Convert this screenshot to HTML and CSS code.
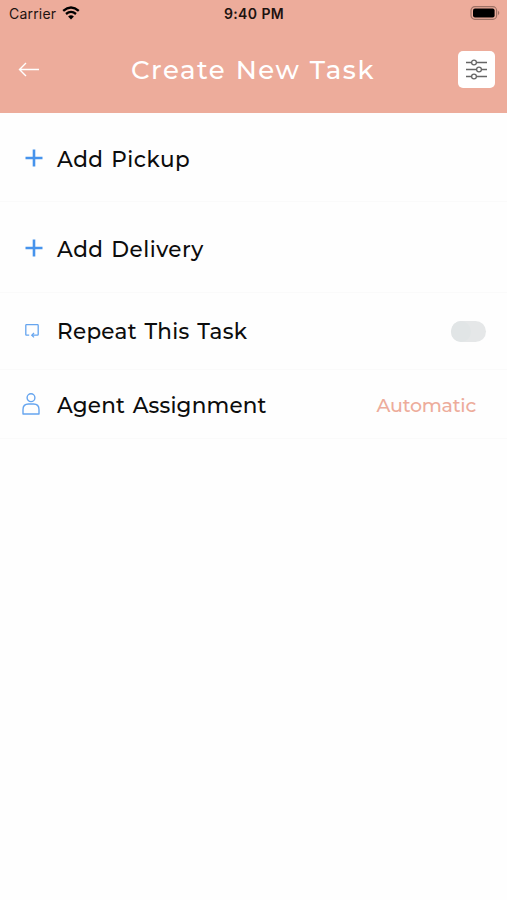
FILE: index.html
```html
<!DOCTYPE html>
<html lang="en">
<head>
    <meta charset="UTF-8">
    <meta name="viewport" content="width=device-width, initial-scale=1.0">
    <title>Create New Task</title>
    <link rel="stylesheet" href="styles.css">
</head>
<body>
    <header class="header">
        <div class="status-bar">
            <div class="carrier">
                <span>Carrier</span>
                <svg width="18" height="14" viewBox="0 0 18 14">
                    <path d="M1.2 4.8 Q9 -1.8 16.8 4.8" fill="none" stroke="#000" stroke-width="2.4"/>
                    <path d="M4 8 Q9 3.8 14 8" fill="none" stroke="#000" stroke-width="2.3"/>
                    <path d="M6.1 10.4 Q9 8 11.9 10.4 L9 13.4 Z"/>
                </svg>
            </div>
            <span class="time">9:40 PM</span>
            <svg class="battery" width="31" height="14" viewBox="0 0 31 14">
                <rect x="1" y=".7" width="25.6" height="12.6" rx="3.8" fill="none" stroke="#9d7165" stroke-width="1.2"/>
                <rect x="3" y="2.4" width="21.6" height="9.2" rx="2"/>
                <path d="M28 4.8 Q30.6 7 28 9.2 Z" fill="#9d7165"/>
            </svg>
        </div>
        <div class="nav-bar">
            <button class="back-button" type="button" aria-label="Back">
                <svg width="22" height="16" viewBox="0 0 22 16">
                    <path d="M21 7.5H1.5M8 1L1.5 7.5L8 14" fill="none" stroke="#fff" stroke-width="1.4"/>
                </svg>
            </button>
            <h1 class="title">Create New Task</h1>
            <button class="filter-button" type="button" aria-label="Options">
                <svg width="22" height="22" viewBox="0 0 22 22" fill="#fff" stroke="#666" stroke-width="1.3">
                    <path d="M0 3.5H21M0 10.5H21M0 17.5H21"/>
                    <circle cx="8" cy="3.5" r="2.4"/>
                    <circle cx="13" cy="10.5" r="2.4"/>
                    <circle cx="8" cy="17.5" r="2.4"/>
                </svg>
            </button>
        </div>
    </header>

    <main class="task-list">
        <div class="row row-pickup">
            <svg class="icon icon-plus" width="18" height="18" viewBox="0 0 18 18">
                <path d="M9 .5V17.5M.5 9H17.5" stroke="#4693ec" stroke-width="2.6"/>
            </svg>
            <span class="label label-pickup">Add Pickup</span>
        </div>
        <div class="row row-delivery">
            <svg class="icon icon-plus" width="18" height="18" viewBox="0 0 18 18">
                <path d="M9 .5V17.5M.5 9H17.5" stroke="#4693ec" stroke-width="2.6"/>
            </svg>
            <span class="label label-delivery">Add Delivery</span>
        </div>
        <div class="row row-repeat">
            <svg class="icon icon-repeat" width="14" height="14" viewBox="0 0 14 14" fill="none" stroke="#66a5ef" stroke-width="1.3">
                <path d="M4.2 11.2H1.6Q.8 11.2 .8 10.4V1.4Q.8 .6 1.6 .6H12.4Q13.2 .6 13.2 1.4V10.4Q13.2 11.2 12.4 11.2H7"/>
                <path d="M9 9L6.8 11.2L9 13.4"/>
            </svg>
            <span class="label label-repeat">Repeat This Task</span>
            <span class="toggle"><span class="toggle-knob"></span></span>
        </div>
        <div class="row row-agent">
            <svg class="icon icon-agent" width="18" height="22" viewBox="0 0 18 22" fill="none" stroke="#66a5ef" stroke-width="1.4">
                <circle cx="9" cy="4.7" r="3.9"/>
                <path d="M1 21V16.5Q1 11 6.5 11H11.5Q17 11 17 16.5V21Z" stroke-linejoin="round"/>
            </svg>
            <span class="label label-agent">Agent Assignment</span>
            <span class="value">Automatic</span>
        </div>
    </main>
</body>
</html>
```

FILE: styles.css
```css
* {
    box-sizing: border-box;
}
body {
    margin: 0;
    min-height: 100vh;
    background-color: #fefefe;
    font-family: Montserrat, Inter, sans-serif;
    font-weight: 500;
    color: #0c0c0c;
}
button {
    padding: 0;
    border: none;
    background: none;
    cursor: pointer;
}
svg {
    display: block;
    flex-shrink: 0;
}
.header {
    height: 113px;
    background-color: #edac9b;
}
.status-bar {
    display: grid;
    grid-template-columns: 1fr auto 1fr;
    align-items: center;
    height: 26px;
    padding: 0 7px 0 8px;
    font-family: Inter, sans-serif;
    font-size: 14px;
    color: #1d1310;
}
.carrier {
    display: flex;
    align-items: center;
    gap: 6px;
    padding-left: 1px;
    font-weight: 400;
    letter-spacing: 0.2px;
}
.time {
    font-weight: 600;
    letter-spacing: 0.4px;
}
.battery {
    justify-self: end;
    margin-right: -1px;
}
.nav-bar {
    display: flex;
    align-items: center;
    height: 87px;
    padding: 0 12px 0 18px;
}
.title {
    margin: 0 auto 0 91px;
    font-size: 26px;
    font-weight: 500;
    letter-spacing: 1.5px;
    word-spacing: 1px;
    white-space: nowrap;
    color: #fff;
}
.filter-button {
    display: flex;
    align-items: center;
    justify-content: center;
    width: 37px;
    height: 37px;
    border-radius: 5px;
    background-color: #fff;
}
.row {
    display: flex;
    align-items: center;
    padding: 0 21px 0 22px;
    border-bottom: 1px solid #fafafa;
}
.row-pickup {
    height: 89px;
    padding-top: 4px;
}
.row-delivery {
    height: 91px;
    padding-top: 4px;
}
.row-repeat {
    height: 77px;
}
.row-agent {
    height: 69px;
    padding-top: 2px;
    padding-right: 31px;
}
.icon-plus {
    margin: 0 14px 3px 3px;
}
.icon-repeat {
    margin: 0 18px 1px 3px;
}
.icon-agent {
    margin: 0 17px 2px 0;
}
.label {
    font-size: 21.5px;
    word-spacing: 1.5px;
    white-space: nowrap;
}
.label-pickup,
.label-delivery {
    letter-spacing: 0.5px;
}
.label-repeat {
    letter-spacing: 0.3px;
}
.label-agent {
    letter-spacing: 0.2px;
}
.toggle {
    width: 35px;
    height: 21px;
    margin-left: auto;
    border-radius: 11px;
    background-color: #e5e7e8;
}
.toggle-knob {
    display: block;
    width: 20px;
    height: 21px;
    border-radius: 50%;
    background-color: #e1e5e6;
}
.value {
    margin-left: auto;
    font-size: 19px;
    letter-spacing: -0.25px;
    color: #edac9b;
}
```
